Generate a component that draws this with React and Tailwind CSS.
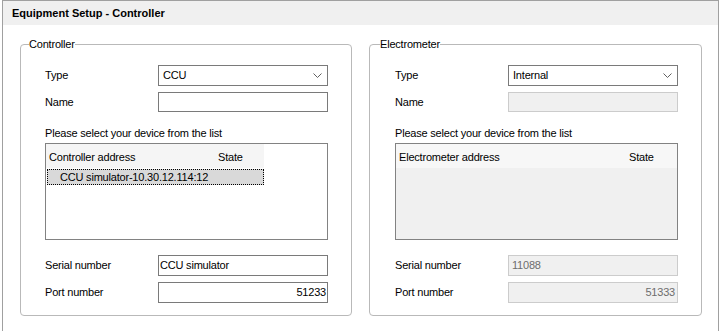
import React from 'react';

function Chevron() {
  return (
    <svg width="9" height="5" viewBox="0 0 9 5" className="shrink-0">
      <polyline points="0.5,0.5 4.5,4.5 8.5,0.5" fill="none" stroke="#606060" strokeWidth="1" />
    </svg>
  );
}

function Row({ label, children, className = '' }) {
  return (
    <div className={`flex items-center ${className}`}>
      <div className="w-[113px] shrink-0">{label}</div>
      {children}
    </div>
  );
}

function Combo({ value }) {
  return (
    <div className="w-[170px] h-[21px] border border-[#7a7a7a] bg-white flex items-center justify-between pl-[4px] pr-[5px]">
      <span>{value}</span>
      <Chevron />
    </div>
  );
}

function TextBox({ value = '', disabled = false, right = false, h = 'h-[20px]' }) {
  return (
    <div
      className={`w-[170px] ${h} border flex items-center ${
        disabled
          ? 'bg-[#f0f0f0] border-[#cccccc] text-[#6d6d6d] pl-[3px] pr-[2px]'
          : 'bg-white border-[#7a7a7a] pl-[1px] pr-[1px]'
      } ${right ? 'justify-end' : ''}`}
    >
      {value}
    </div>
  );
}

function DeviceList({ col1, col1w, col2w, rows = [], disabled = false }) {
  return (
    <div
      className={`w-[283px] h-[97px] border border-[#828282] ${disabled ? 'bg-[#f0f0f0]' : 'bg-white'}`}
    >
      <div
        className={`flex h-[24px] items-center ${disabled ? 'bg-[#f7f7f7]' : 'bg-[#f5f5f5] w-[218px]'}`}
      >
        <div className={`${col1w} pl-[3px] pt-[2px]`}>{col1}</div>
        <div className={`${col2w} pl-[4px] pt-[2px]`}>State</div>
      </div>
      {rows.map((r) => (
        <div
          key={r}
          className="ml-[1px] mt-[1px] w-[217px] h-[16px] bg-[#d9d9d9] border border-dotted border-black flex items-center pl-[12px]"
        >
          {r}
        </div>
      ))}
    </div>
  );
}

function Group({ title, width, legendMl, children }) {
  return (
    <fieldset className={`${width} h-[279px] border border-[#b9b9b9] rounded-[4px] m-0 p-0`}>
      <legend className={`${legendMl} p-0 leading-[14px]`}>{title}</legend>
      {children}
    </fieldset>
  );
}

export default function App() {
  return (
    <div className="w-[720px] h-[331px] bg-white overflow-hidden font-['Liberation_Sans',Arial,sans-serif] text-[11px] tracking-[-0.2px] text-black">
      <div className="ml-[2px] w-[717px] h-[331px] border-l border-t border-r border-[#a0a0a0]">
        <div className="h-[24px] bg-[#f0f0f0] pl-[9px] flex items-center font-bold tracking-normal">
          Equipment Setup - Controller
        </div>

        <div className="flex pl-[17px] pt-[12px] gap-[17px]">
          <Group title="Controller" width="w-[332px]" legendMl="ml-[8px]">
            <div className="pl-[24px] pt-[14px]">
              <Row label="Type" className="h-[21px]">
                <Combo value="CCU" />
              </Row>
              <Row label="Name" className="mt-[6px]">
                <TextBox />
              </Row>
              <div className="mt-[14px] leading-[14px]">Please select your device from the list</div>
              <div className="mt-[3px]">
                <DeviceList
                  col1="Controller address"
                  col1w="w-[168px]"
                  col2w="w-[50px]"
                  rows={['CCU simulator-10.30.12.114:12']}
                />
              </div>
              <Row label="Serial number" className="mt-[15px]">
                <TextBox value="CCU simulator" h="h-[21px]" />
              </Row>
              <Row label="Port number" className="mt-[6px]">
                <TextBox value="51233" right h="h-[21px]" />
              </Row>
            </div>
          </Group>

          <Group title="Electrometer" width="w-[333px]" legendMl="ml-[10px]">
            <div className="pl-[25px] pt-[14px]">
              <Row label="Type" className="h-[21px]">
                <Combo value="Internal" />
              </Row>
              <Row label="Name" className="mt-[6px]">
                <TextBox disabled />
              </Row>
              <div className="mt-[14px] leading-[14px]">Please select your device from the list</div>
              <div className="mt-[3px]">
                <DeviceList
                  col1="Electrometer address"
                  col1w="w-[229px]"
                  col2w="w-[52px]"
                  disabled
                />
              </div>
              <Row label="Serial number" className="mt-[15px]">
                <TextBox value="11088" disabled h="h-[21px]" />
              </Row>
              <Row label="Port number" className="mt-[6px]">
                <TextBox value="51333" disabled right h="h-[21px]" />
              </Row>
            </div>
          </Group>
        </div>
      </div>
    </div>
  );
}
